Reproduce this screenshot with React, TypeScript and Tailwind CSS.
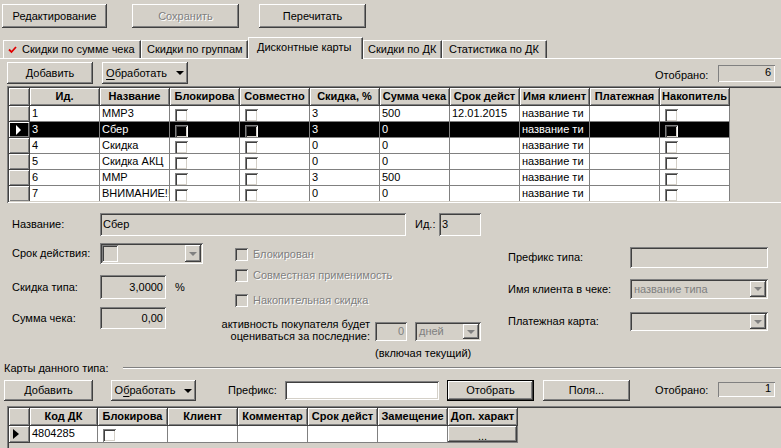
import type { ReactNode } from "react";

// classic 3D bevels
const RAISED =
  "shadow-[inset_-1px_-1px_#404040,inset_1px_1px_#ffffff,inset_-2px_-2px_#808080]";
const SUNKEN =
  "shadow-[inset_1px_1px_#808080,inset_-1px_-1px_#ffffff,inset_2px_2px_#404040,inset_-2px_-2px_#d4d0c8]";
const THIN_SUNKEN = "shadow-[inset_1px_1px_#808080,inset_-1px_-1px_#ffffff]";
const DISABLED_TEXT = "text-[#808080] [text-shadow:1px_1px_0_#ffffff]";

const HDR =
  "box-border h-full flex items-center justify-center border-r border-b border-[#404040] bg-[#d4d0c8] shadow-[inset_1px_1px_#ffffff,inset_-1px_-1px_#808080] font-bold overflow-hidden whitespace-nowrap";
const IND =
  "box-border h-full w-[21px] shrink-0 flex items-center border-r border-b border-[#404040] shadow-[inset_1px_1px_#ffffff,inset_-1px_-1px_#808080]";
const CELL =
  "box-border h-full shrink-0 flex items-start pt-[1px] pl-[2px] border-r border-b border-[#808080] overflow-hidden whitespace-nowrap";

const TAB =
  "box-border flex items-center border-t border-l border-white border-r border-r-[#404040] shadow-[inset_-1px_0_#808080] whitespace-nowrap bg-[#d4d0c8]";

type Cell = string | boolean;

const COLS1 = [
  "Ид.",
  "Название",
  "Блокирова",
  "Совместно",
  "Скидка, %",
  "Сумма чека",
  "Срок дейст",
  "Имя клиент",
  "Платежная",
  "Накопитель",
];

const ROWS1: Cell[][] = [
  ["1", "ММР3", false, false, "3", "500", "12.01.2015", "название ти", "", false],
  ["3", "Сбер", false, false, "3", "0", "", "название ти", "", false],
  ["4", "Скидка", false, false, "0", "0", "", "название ти", "", false],
  ["5", "Скидка АКЦ", false, false, "0", "0", "", "название ти", "", false],
  ["6", "ММР", false, false, "3", "500", "", "название ти", "", false],
  ["7", "ВНИМАНИЕ!!!", false, false, "0", "0", "", "название ти", "", false],
];

const COLS2 = ["Код ДК", "Блокирова", "Клиент", "Комментар", "Срок дейст", "Замещение", "Доп. характ"];
const W2 = ["w-[68px]", "w-[70px]", "w-[70px]", "w-[70px]", "w-[70px]", "w-[70px]", "w-[70px]"];

function DownTri({ gray }: { gray?: boolean }) {
  return (
    <span
      className={`inline-block w-0 h-0 border-x-[4px] border-x-transparent border-t-[4px] ${
        gray ? "border-t-[#808080]" : "border-t-black"
      }`}
    />
  );
}

function Button({
  className = "",
  disabled,
  isDefault,
  children,
}: {
  className?: string;
  disabled?: boolean;
  isDefault?: boolean;
  children: ReactNode;
}) {
  return (
    <div
      className={`box-border flex items-center justify-center bg-[#d4d0c8] whitespace-nowrap ${RAISED} ${
        isDefault ? "border border-black" : ""
      } ${disabled ? DISABLED_TEXT : "text-black"} ${className}`}
    >
      {children}
    </div>
  );
}

function MenuButton({ className, underlineSecond }: { className: string; underlineSecond?: boolean }) {
  return (
    <Button className={className}>
      {underlineSecond ? (
        <span>
          О<span className="underline underline-offset-[2px]">б</span>работать
        </span>
      ) : (
        <span>
          <span className="underline underline-offset-[2px]">О</span>бработать
        </span>
      )}
      <span className="ml-[9px] flex items-center">
        <DownTri />
      </span>
    </Button>
  );
}

function Counter({ value, labelTop, boxClass }: { value: string; labelTop: string; boxClass: string }) {
  return (
    <div className="ml-auto mr-[6px] flex items-start">
      <span className={`w-[63px] ${labelTop}`}>Отобрано:</span>
      <div className={`w-[57px] text-right pr-[4px] ${THIN_SUNKEN} ${boxClass}`}>{value}</div>
    </div>
  );
}

function GridCheck({ dark }: { dark?: boolean }) {
  return (
    <div
      className={`ml-[3px] mt-[2px] w-[13px] h-[13px] shrink-0 ${dark ? "bg-black" : "bg-white"} ${SUNKEN}`}
    />
  );
}

function FormCheck({ label, className }: { label: string; className: string }) {
  return (
    <div className={`flex items-center pl-[20px] h-[14px] ${className}`}>
      <div className={`w-[13px] h-[13px] bg-[#d4d0c8] ${SUNKEN}`} />
      <span className={`ml-[5px] ${DISABLED_TEXT} whitespace-nowrap`}>{label}</span>
    </div>
  );
}

function Field({ className, children, right }: { className: string; children?: ReactNode; right?: boolean }) {
  return (
    <div
      className={`box-border flex items-center bg-[#d4d0c8] px-[3px] whitespace-nowrap ${SUNKEN} ${
        right ? "justify-end" : ""
      } ${className}`}
    >
      {children}
    </div>
  );
}

function Combo({ className, children }: { className: string; children?: ReactNode }) {
  return (
    <div className={`box-border flex items-stretch p-[2px] bg-[#d4d0c8] ${SUNKEN} ${className}`}>
      <div className="flex-1 flex items-center pl-[2px] text-[#808080] overflow-hidden whitespace-nowrap">
        {children}
      </div>
      <div className={`w-[16px] flex items-center justify-center bg-[#d4d0c8] ${RAISED}`}>
        <DownTri gray />
      </div>
    </div>
  );
}

function RedCheck() {
  return (
    <svg width="9" height="8" viewBox="0 0 9 8" className="shrink-0">
      <path d="M1 3.5 L3.5 6 L8 1" fill="none" stroke="#e00000" strokeWidth="1.8" />
    </svg>
  );
}

function TopGrid() {
  return (
    <div className={`ml-[7px] w-[776px] h-[117px] p-[2px] bg-[#d4d0c8] ${SUNKEN}`}>
      <div className="h-full overflow-hidden">
        <div className="flex h-[18px]">
          <div className={`${IND} bg-[#d4d0c8]`} />
          {COLS1.map((c) => (
            <div key={c} className={`${HDR} w-[70px] shrink-0`}>
              {c}
            </div>
          ))}
        </div>
        {ROWS1.map((row, i) => {
          const sel = i === 1;
          return (
            <div key={i} className="flex h-[16px]">
              <div className={`${IND} ${sel ? "bg-black" : "bg-[#d4d0c8]"}`}>
                {sel && (
                  <span className="ml-[7px] w-0 h-0 border-y-[5px] border-y-transparent border-l-[5px] border-l-white" />
                )}
              </div>
              {row.map((c, j) => (
                <div
                  key={j}
                  className={`${CELL} w-[70px] ${sel ? "bg-black text-white" : "bg-white text-black"}`}
                >
                  {typeof c === "boolean" ? <GridCheck dark={sel} /> : c}
                </div>
              ))}
            </div>
          );
        })}
      </div>
    </div>
  );
}

function BottomGrid() {
  return (
    <div className={`ml-[7px] w-[776px] h-[50px] p-[2px] bg-[#d4d0c8] ${SUNKEN}`}>
      <div className="h-full overflow-hidden">
        <div className="flex h-[18px]">
          <div className={`${IND} bg-[#d4d0c8]`} />
          {COLS2.map((c, i) => (
            <div key={c} className={`${HDR} ${W2[i]} shrink-0`}>
              {c}
            </div>
          ))}
        </div>
        <div className="flex h-[17px]">
          <div className={`${IND} bg-[#d4d0c8]`}>
            <span className="ml-[4px] w-0 h-0 border-y-[5px] border-y-transparent border-l-[6px] border-l-black" />
          </div>
          <div className={`${CELL} ${W2[0]} bg-white`}>4804285</div>
          <div className={`${CELL} ${W2[1]} bg-white`}>
            <GridCheck />
          </div>
          <div className={`${CELL} ${W2[2]} bg-white`} />
          <div className={`${CELL} ${W2[3]} bg-white`} />
          <div className={`${CELL} ${W2[4]} bg-white`} />
          <div className={`${CELL} ${W2[5]} bg-white`} />
          <div className={`box-border h-full ${W2[6]} border-r border-b border-[#808080]`}>
            <div className={`h-full flex items-end justify-center pb-[1px] bg-[#d4d0c8] leading-[10px] ${RAISED}`}>
              ...
            </div>
          </div>
        </div>
      </div>
    </div>
  );
}

export default function App() {
  return (
    <div className="w-[781px] h-[448px] overflow-hidden bg-[#d4d0c8] font-['Liberation_Sans',Arial,sans-serif] text-[11px] leading-[13px] text-black">
      {/* top command buttons */}
      <div className="flex h-[36px] pt-[4px]">
        <Button className="ml-[2px] w-[105px] h-[24px]">Редактирование</Button>
        <Button className="ml-[25px] w-[107px] h-[24px]" disabled>
          Сохранить
        </Button>
        <Button className="ml-[20px] w-[107px] h-[24px]">Перечитать</Button>
      </div>

      {/* tabs */}
      <div className="flex items-end h-[23px] pl-[3px] border-b border-white">
        <div className={`${TAB} h-[18px] w-[138px] pl-[4px]`}>
          <RedCheck />
          <span className="ml-[5px]">Скидки по сумме чека</span>
        </div>
        <div className={`${TAB} h-[18px] w-[107px] pl-[5px]`}>Скидки по группам</div>
        <div className={`${TAB} relative -mb-px h-[22px] w-[115px] pl-[8px] pb-[3px]`}>Дисконтные карты</div>
        <div className={`${TAB} h-[18px] w-[79px] pl-[4px]`}>Скидки по ДК</div>
        <div className={`${TAB} h-[18px] w-[105px] pl-[6px]`}>Статистика по ДК</div>
      </div>

      {/* grid toolbar */}
      <div className="flex h-[27px] pt-[3px]">
        <Button className="ml-[7px] w-[86px] h-[22px]">Добавить</Button>
        <MenuButton className="ml-[9px] w-[86px] h-[22px]" />
        <Counter value="6" labelTop="mt-[7px]" boxClass="mt-[3px] h-[17px] pt-[1px]" />
      </div>

      <TopGrid />

      {/* record form */}
      <div className="h-[157px] pt-[10px]">
        <div className="flex items-center h-[23px]">
          <span className="ml-[12px] w-[88px]">Название:</span>
          <Field className="w-[306px] h-[23px]">Сбер</Field>
          <span className="ml-[9px] w-[24px]">Ид.:</span>
          <Field className="w-[42px] h-[23px]">3</Field>
        </div>

        <div className="flex mt-[7px]">
          {/* left column */}
          <div className="ml-[12px] w-[191px] flex flex-col">
            <div className="flex items-center h-[21px]">
              <span className="w-[88px]">Срок действия:</span>
              <div className={`box-border flex items-stretch p-[2px] w-[103px] h-[21px] bg-[#d4d0c8] ${SUNKEN}`}>
                <div className={`w-[16px] bg-[#d4d0c8] ${SUNKEN}`} />
                <div className="flex-1" />
                <div className={`w-[16px] flex items-center justify-center ${RAISED}`}>
                  <DownTri gray />
                </div>
              </div>
            </div>
            <div className="flex items-center mt-[11px] h-[24px]">
              <span className="w-[88px]">Скидка типа:</span>
              <Field className="w-[66px] h-[24px]" right>
                3,0000
              </Field>
              <span className="ml-[9px]">%</span>
            </div>
            <div className="flex items-center mt-[8px] h-[22px]">
              <span className="w-[88px]">Сумма чека:</span>
              <Field className="w-[66px] h-[22px]" right>
                0,00
              </Field>
            </div>
          </div>

          {/* middle column */}
          <div className="ml-[12px] w-[266px] flex flex-col">
            <FormCheck label="Блокирован" className="mt-[4px]" />
            <FormCheck label="Совместная применимость" className="mt-[7px]" />
            <FormCheck label="Накопительная скидка" className="mt-[11px]" />
            <div className="flex mt-[11px]">
              <div className="w-[155px] text-right leading-[12px] whitespace-nowrap">
                активность покупателя будет
                <br />
                оцениваться за последние:
              </div>
              <Field className="ml-[5px] mt-[4px] w-[32px] h-[19px] text-[#808080]" right>
                0
              </Field>
              <Combo className="ml-[8px] mt-[4px] w-[66px] h-[19px]">дней</Combo>
            </div>
            <div className="pl-[160px] mt-[5px] whitespace-nowrap">(включая текущий)</div>
          </div>

          {/* right column */}
          <div className="ml-[27px] flex flex-col">
            <div className="flex items-center mt-[4px] h-[21px]">
              <span className="w-[122px]">Префикс типа:</span>
              <Field className="w-[138px] h-[21px]" />
            </div>
            <div className="flex items-center mt-[11px] h-[20px]">
              <span className="w-[122px]">Имя клиента в чеке:</span>
              <Combo className="w-[138px] h-[20px]">название типа</Combo>
            </div>
            <div className="flex items-center mt-[13px] h-[19px]">
              <span className="w-[122px]">Платежная карта:</span>
              <Combo className="w-[138px] h-[19px]" />
            </div>
          </div>
        </div>
      </div>

      {/* cards of this type */}
      <div className="flex items-center h-[16px]">
        <span className="ml-[4px] w-[119px] whitespace-nowrap">Карты данного типа:</span>
        <div className="flex-1 h-[2px] border-t border-[#808080] border-b border-b-white" />
      </div>

      <div className="flex h-[30px] pt-[4px]">
        <Button className="ml-[4px] w-[89px] h-[21px]">Добавить</Button>
        <MenuButton className="ml-[18px] w-[85px] h-[21px]" underlineSecond />
        <span className="ml-[32px] w-[57px] mt-[4px]">Префикс:</span>
        <div className={`mt-[1px] w-[154px] h-[19px] bg-white ${SUNKEN}`} />
        <Button className="ml-[8px] w-[87px] h-[21px]" isDefault>
          Отобрать
        </Button>
        <Button className="ml-[9px] w-[87px] h-[21px]">Поля...</Button>
        <Counter value="1" labelTop="mt-[4px]" boxClass="mt-[2px] h-[15px]" />
      </div>

      <BottomGrid />
    </div>
  );
}
